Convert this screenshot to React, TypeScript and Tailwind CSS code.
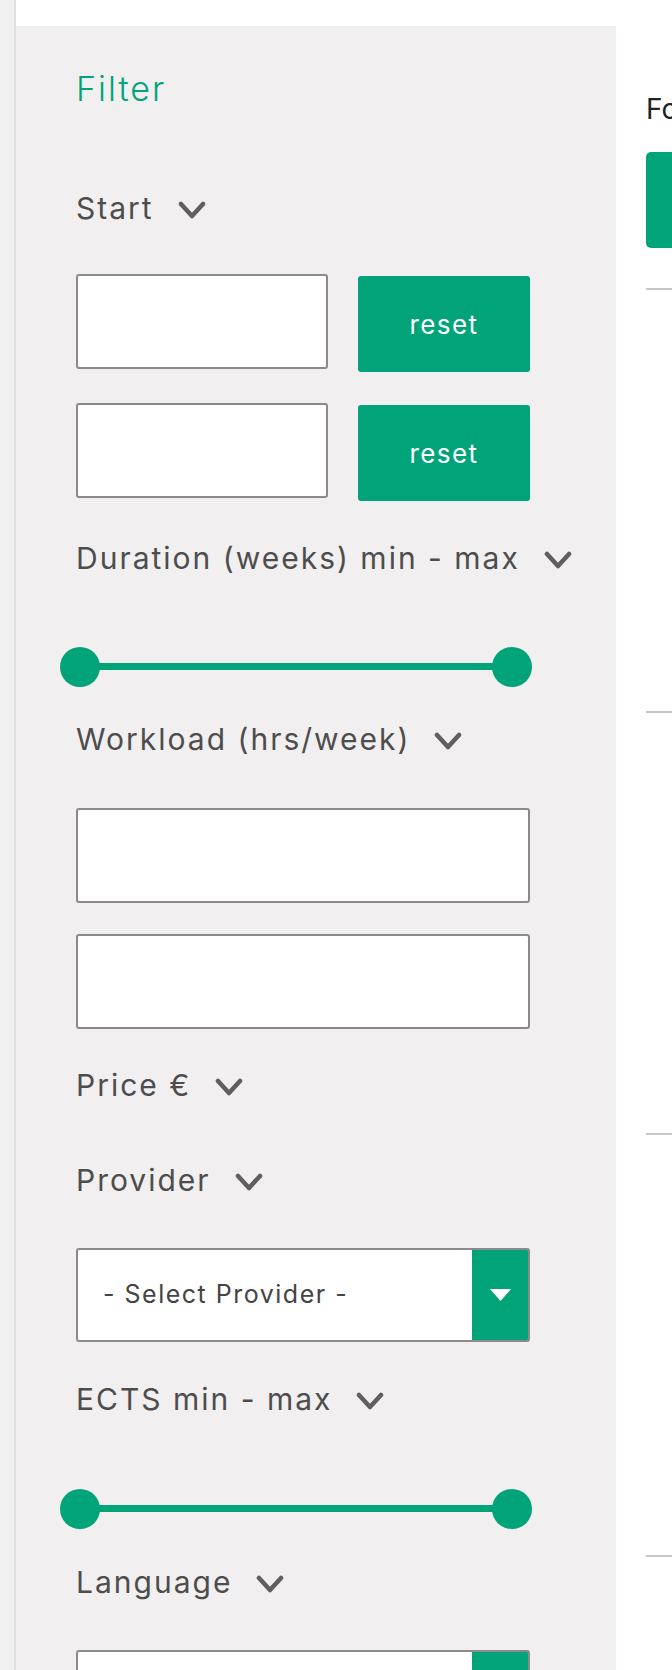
import React from 'react';

const GREEN = 'bg-[#00a478]';

const Chevron = () => (
  <svg width="28" height="18" viewBox="0 0 28 18" className="ml-[24px] mt-[4px] shrink-0 blur-[0.6px]">
    <polyline points="3,3 14,15 25,3" fill="none" stroke="#5f5f5f" strokeWidth="4.5" strokeLinecap="round" strokeLinejoin="round" />
  </svg>
);

const Label = ({ text, className = '' }: { text: string; className?: string }) => (
  <div className={`flex items-center h-[32px] shrink-0 ${className}`}>
    <span className="text-[30px] leading-[32px] tracking-[2px] text-[#4d4d4d] whitespace-nowrap">{text}</span>
    <Chevron />
  </div>
);

const RangeSlider = ({ className = '' }: { className?: string }) => (
  <div className={`relative -ml-[16px] w-[472px] h-[40px] shrink-0 ${className}`}>
    <div className={`absolute left-[20px] right-[20px] top-[16px] h-[7px] ${GREEN}`} />
    <div className={`absolute left-0 top-0 size-[40px] rounded-full ${GREEN}`} />
    <div className={`absolute right-0 top-0 size-[40px] rounded-full ${GREEN}`} />
  </div>
);

const DateRow = ({ className = '' }: { className?: string }) => (
  <div className={`flex items-start shrink-0 ${className}`}>
    <input className="w-[252px] h-[95px] bg-white border-2 border-[#8a8a8a] rounded-[3px]" />
    <button className={`ml-[30px] mt-[2px] w-[172px] h-[96px] rounded-[3px] ${GREEN} text-white text-[26px] tracking-[1.4px]`}>
      reset
    </button>
  </div>
);

const SelectBox = ({ placeholder, className = '' }: { placeholder: string; className?: string }) => (
  <div className={`flex w-[454px] h-[94px] shrink-0 bg-white border-2 border-[#8a8a8a] rounded-[3px] overflow-hidden ${className}`}>
    <div className="flex-1 flex items-center pl-[25px] text-[25px] tracking-[1.5px] text-[#444] whitespace-nowrap">{placeholder}</div>
    <div className={`w-[56px] flex items-center justify-center ${GREEN}`}>
      <svg width="21" height="12" viewBox="0 0 21 12">
        <polygon points="0,0 21,0 10.5,12" fill="#fff" />
      </svg>
    </div>
  </div>
);

export default function App() {
  return (
    <div className="flex w-[672px] h-[1670px] overflow-hidden bg-white" style={{ fontFamily: 'Inter, "Liberation Sans", sans-serif' }}>
      <div className="w-[14px] shrink-0 bg-[#f0f0f0]" />
      <div className="w-[2px] shrink-0 bg-[#e0e0e0]" />
      <div className="flex items-start pt-[26px]">
        {/* Filter panel */}
        <aside className="w-[600px] shrink-0 min-h-[1644px] bg-[#f1eff0] pl-[60px] pt-[43px] flex flex-col">
          <h2 className="text-[34px] leading-[40px] tracking-[2px] text-[#00a478] font-light">Filter</h2>

          <Label text="Start" className="mt-[83px]" />
          <DateRow className="mt-[50px]" />
          <DateRow className="mt-[31px]" />

          <Label text="Duration (weeks) min - max" className="mt-[41px]" />
          <RangeSlider className="mt-[73px]" />

          <Label text="Workload (hrs/week)" className="mt-[36px]" />
          <input className="mt-[53px] w-[454px] h-[95px] shrink-0 bg-white border-2 border-[#8a8a8a] rounded-[3px]" />
          <input className="mt-[31px] w-[454px] h-[95px] shrink-0 bg-white border-2 border-[#8a8a8a] rounded-[3px]" />

          <Label text="Price €" className="mt-[40px]" />
          <Label text="Provider" className="mt-[63px]" />
          <SelectBox placeholder="- Select Provider -" className="mt-[52px]" />

          <Label text="ECTS min - max" className="mt-[41px]" />
          <RangeSlider className="mt-[74px]" />

          <Label text="Language" className="mt-[37px]" />
          <SelectBox placeholder="- Select Language -" className="mt-[52px]" />
        </aside>

        {/* Results */}
        <main className="ml-[30px] w-[400px] shrink-0 pt-[66px]">
          <div className="text-[28px] leading-[34px] text-[#222] whitespace-nowrap">Found 24 courses</div>
          <div className={`mt-[26px] h-[96px] w-[300px] rounded-[5px] ${GREEN}`} />
          <div className="mt-[40px] h-[2px] bg-[#c8c8c8]" />
          <div className="h-[421px]" />
          <div className="h-[2px] bg-[#c8c8c8]" />
          <div className="h-[420px]" />
          <div className="h-[2px] bg-[#c8c8c8]" />
          <div className="h-[420px]" />
          <div className="h-[2px] bg-[#c8c8c8]" />
        </main>
      </div>
    </div>
  );
}
